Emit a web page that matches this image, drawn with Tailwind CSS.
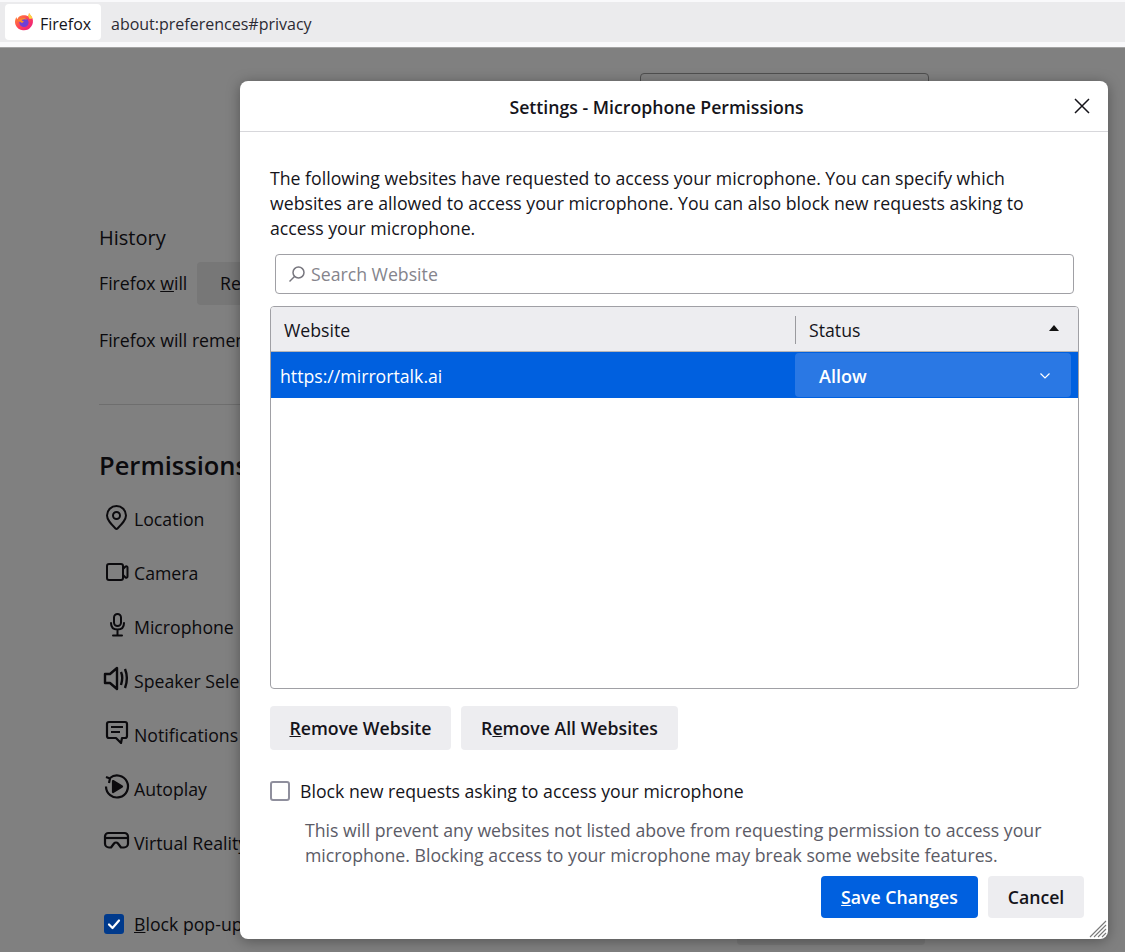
<!DOCTYPE html>
<html lang="en">
<head>
<meta charset="UTF-8" />
<title>Settings - Microphone Permissions</title>
<script src="https://cdn.jsdelivr.net/npm/@tailwindcss/browser@4"></script>
</head>
<body class="relative h-[952px] overflow-hidden bg-[#808080] font-['Open_Sans','Noto_Sans',sans-serif] text-[17.7px] text-[#15141a]">
  <!-- Address bar -->
  <header class="h-[48px] border-b border-[#a3a3a3] bg-[#f9f9fb] pt-[2px]">
    <div class="flex h-[40px] items-center bg-[#ebebed] pl-[5px]">
      <div class="flex h-[36px] w-[96px] items-center gap-[6px] rounded bg-white pl-[9px] text-[16px]">
        <svg width="20" height="20" viewBox="0 0 20 20" class="shrink-0">
          <defs>
            <linearGradient id="fx" x1="0" y1="0" x2="1" y2="1"><stop offset="0" stop-color="#ff9a2e"/><stop offset="0.55" stop-color="#ff3d5a"/><stop offset="1" stop-color="#e31587"/></linearGradient>
          </defs>
          <path d="M15 1c.6 1.600 2.700 3 3.500 5.500.9 2.800.5 5.700-1.300 8A9 9 0 0 1 1.600 13C.6 10.500.9 7.500 2.400 5c.1 1 .5 1.700 1 2.200C4 5 6 3.500 8.700 3.200 11 3 13 3.500 14.400 4.300 14.700 3.200 15 2 15 1z" fill="url(#fx)"/>
          <path d="M15 1c1.200 1.500 3 3 3.500 5.500l-3 .5c-.3-1-1-2-1.500-2.700C14.700 3.200 15 2 15 1z" fill="#ffd23f"/>
          <circle cx="10" cy="10.500" r="4.600" fill="#6f3fd6"/>
          <path d="M4 8.500c1.500-2 4-3 6.500-2.400 1.300.3 2 1 2.500 1.700-1.500-.7-3.500-.7-4.800 0-.4.200-.4.700 0 .9L10 9.500l-2 1.600C6 10 5 9.400 4 8.500z" fill="#ff8a24"/>
        </svg>
        <span class="translate-y-[2px]">Firefox</span>
      </div>
      <span class="ml-[10px] translate-y-[2px] text-[16px] text-[#2b2a33]">about:preferences#privacy</span>
    </div>
  </header>

  <!-- Dimmed preferences page behind the dialog -->
  <main class="w-[925px] pl-[99px] text-[#0b0a0d]">
    <div class="ml-[541px] h-[40px] w-[289px] translate-y-[25px] rounded border border-[#4f4f4f]"></div>
    <h2 class="mt-[136px] text-[20px] leading-[27px] font-medium">History</h2>
    <div class="mt-[11px] flex h-[43px] items-center">
      <span class="w-[98px]">Firefox <span class="underline">w</span>ill</span>
      <span class="flex h-full w-[120px] items-center rounded bg-[#777777] pl-[23px]">Re</span>
    </div>
    <p class="mt-[23px] leading-[25px] whitespace-nowrap">Firefox will remember</p>
    <div class="mt-[51px] h-px w-[400px] bg-[#6e6e6e]"></div>
    <h2 class="mt-[42px] text-[25.5px] leading-[36px] font-semibold">Permissions</h2>
    <ul class="mt-[24px] flex flex-col gap-[29px] leading-[25px]">
      <li class="flex items-center gap-[6px] whitespace-nowrap">
        <svg width="30" height="30" viewBox="0 0 30 30" fill="none" stroke="#0b0a0d" stroke-width="2" class="-my-[4px] -translate-y-[3px] overflow-visible"><path d="M18.500 26.500c-.6.6-1.400.6-2 0C12 22 8 18 8 13.500a9.500 9.500 0 0 1 19 0c0 4.500-4 8.500-8.500 13z"/><circle cx="17.500" cy="13.500" r="3.500"/></svg>
        <span class="-ml-[1px]">Location</span>
      </li>
      <li class="flex items-center gap-[6px] whitespace-nowrap">
        <svg width="30" height="30" viewBox="0 0 30 30" fill="none" stroke="#0b0a0d" stroke-width="2" stroke-linejoin="round" class="-my-[4px] -translate-y-[3px] overflow-visible"><path d="M10 8h12a2 2 0 0 1 2 2v12a2 2 0 0 1-2 2H10a2 2 0 0 1-2-2V10a2 2 0 0 1 2-2z"/><path d="M24 13l2.500-2.500c.8-.6 2-.2 2 1v9c0 1.200-1.200 1.600-2 1L24 19"/></svg>
        <span class="-ml-[1px]">Camera</span>
      </li>
      <li class="flex items-center gap-[6px] whitespace-nowrap">
        <svg width="30" height="30" viewBox="0 0 30 30" fill="none" stroke="#0b0a0d" stroke-width="2" stroke-linecap="round" class="-my-[4px] -translate-y-[3px] overflow-visible"><rect x="15" y="4" width="7" height="12" rx="3.500"/><path d="M12 13c0 4 2.500 6.500 6.500 6.500S25 17 25 13M18.500 19.500V25M14 25.500h9"/></svg>
        <span class="-ml-[1px]">Microphone</span>
      </li>
      <li class="flex items-center gap-[6px] whitespace-nowrap">
        <svg width="30" height="30" viewBox="0 0 30 30" fill="none" stroke="#0b0a0d" stroke-width="2.400" stroke-linejoin="round" class="-my-[4px] -translate-y-[3px] overflow-visible"><path d="M6 10h5l7-6v21l-7-6H6z"/><path d="M22 8c1.600 3.500 1.600 8 0 13M26 5c2.300 5.500 2.300 13 0 19"/></svg>
        <span class="-ml-[1px]">Speaker Selection</span>
      </li>
      <li class="flex items-center gap-[6px] whitespace-nowrap">
        <svg width="30" height="30" viewBox="0 0 30 30" fill="none" stroke="#0b0a0d" stroke-width="2.200" stroke-linejoin="round" class="-my-[4px] -translate-y-[3px] overflow-visible"><path d="M10 4h16a2 2 0 0 1 2 2v12a2 2 0 0 1-2 2h-3l-1 5-5-5H10a2 2 0 0 1-2-2V6a2 2 0 0 1 2-2z"/><path d="M12 9h12M12 14h9"/></svg>
        <span class="-ml-[1px]">Notifications</span>
      </li>
      <li class="flex items-center gap-[6px] whitespace-nowrap">
        <svg width="30" height="30" viewBox="0 0 30 30" fill="none" stroke="#0b0a0d" stroke-width="2.200" class="-my-[4px] -translate-y-[3px] overflow-visible"><path d="M11 6a11 11 0 1 1-4 8.500"/><path d="M7 5l4 1.500L10 11" stroke-linejoin="round"/><path d="M14 9l9 5.500-9 5.500z" fill="#0b0a0d" stroke-linejoin="round"/></svg>
        <span class="-ml-[1px]">Autoplay</span>
      </li>
      <li class="flex items-center gap-[6px] whitespace-nowrap">
        <svg width="30" height="30" viewBox="0 0 30 30" fill="none" stroke="#0b0a0d" stroke-width="2.200" stroke-linejoin="round" class="-my-[4px] -translate-y-[3px] overflow-visible"><path d="M9.500 7h16a3.500 3.500 0 0 1 3.500 3.500v7a4 4 0 0 1-4 4h-3l-3-4a2.500 2.500 0 0 0-4 0l-3 4H10a4 4 0 0 1-4-4v-7A3.500 3.500 0 0 1 9.500 7z"/><path d="M7 12h21"/></svg>
        <span class="-ml-[1px]">Virtual Reality</span>
      </li>
    </ul>
    <div class="mt-[55px] ml-[5px] flex items-center gap-[10px] whitespace-nowrap">
      <span class="flex size-[20px] items-center justify-center rounded-[3px] bg-[#003a8c]">
        <svg width="14" height="14" viewBox="0 0 14 14" fill="none" stroke="#ffffff" stroke-width="2.200" stroke-linecap="round" stroke-linejoin="round"><path d="M2 7.500l3.500 3.500L12 3.500"/></svg>
      </span>
      <span><span class="underline">B</span>lock pop-up windows</span>
      <span class="-my-[11px] ml-auto h-[42px] w-[188px] rounded bg-[#777777]"></span>
    </div>
  </main>

  <!-- Microphone permissions dialog -->
  <section class="absolute top-[81px] left-[240px] flex h-[858px] w-[868px] flex-col rounded-lg bg-white shadow-[0_2px_14px_rgba(0,0,0,0.35)]">
    <div class="relative flex h-[51px] shrink-0 items-center justify-center border-b border-[#d7d7db] pr-[35px]">
      <h1 class="translate-y-[1px] text-[17.7px] font-semibold text-[#15141a]">Settings - Microphone Permissions</h1>
      <svg width="16" height="16" viewBox="0 0 16 16" fill="none" stroke="#15141a" stroke-width="1.500" class="absolute top-[17px] right-[18px]"><path d="M1 1l14 14M15 1L1 15"/></svg>
    </div>

    <div class="flex grow flex-col px-[30px] pt-[34px]">
      <p class="w-[790px] leading-[25px]">The following websites have requested to access your microphone. You can specify which websites are allowed to access your microphone. You can also block new requests asking to access your microphone.</p>

      <div class="mt-[13px] ml-[5px] flex h-[40px] w-[799px] items-center gap-[5px] rounded border border-[#a0a0a5] pl-[12px] text-[#85848c]">
        <svg width="18" height="18" viewBox="0 0 18 18" fill="none" stroke="#77767e" stroke-width="1.500"><circle cx="10.500" cy="7.500" r="5.500"/><path d="M6.500 11.500L1.500 16.500"/></svg>
        <span>Search Website</span>
      </div>

      <div class="mt-[12px] flex h-[383px] w-[809px] flex-col overflow-hidden rounded border border-[#a0a0a5]">
        <div class="flex h-[45px] shrink-0 items-center border-b border-[#b5b5b8] bg-[#ededf0] pt-[2px]">
          <span class="w-[524px] pl-[13px]">Website</span>
          <span class="h-[28px] w-px bg-[#9a9a9e]"></span>
          <span class="pl-[13px]">Status</span>
          <span class="mt-[-4px] ml-auto mr-[19px] h-0 w-0 border-x-[5.500px] border-b-[6px] border-x-transparent border-b-[#111111]"></span>
        </div>
        <div class="flex h-[46px] shrink-0 items-center bg-[#0060df] text-white">
          <span class="w-[524px] translate-y-[1px] pl-[9px]">https://mirrortalk.ai</span>
          <span class="flex h-[44px] w-[276px] items-center justify-between rounded bg-[#2a78e4] pt-[2px] pr-[20px] pl-[24px] text-[18px] font-semibold">
            Allow
            <svg width="12" height="8" viewBox="0 0 12 8" fill="none" stroke="#ffffff" stroke-width="1.200"><path d="M1.500 1.500L6 6l4.500-4.500"/></svg>
          </span>
        </div>
      </div>

      <div class="mt-[17px] flex gap-[10px] text-[17.7px] font-semibold">
        <button class="h-[44px] w-[181px] rounded bg-[#ededf0]"><span class="underline">R</span>emove Website</button>
        <button class="h-[44px] w-[217px] rounded bg-[#ededf0]">R<span class="underline">e</span>move All Websites</button>
      </div>

      <div class="mt-[28px] flex items-center gap-[10px]">
        <span class="size-[20px] rounded-[3px] border-2 border-[#8f8f9d]"></span>
        <span>Block new requests asking to access your microphone</span>
      </div>

      <p class="mt-[13px] ml-[35px] w-[760px] leading-[25px] text-[#5b5b66]">This will prevent any websites not listed above from requesting permission to access your microphone. Blocking access to your microphone may break some website features.</p>

      <div class="mt-[8px] mr-[-6px] flex justify-end gap-[10px] text-[17.7px] font-semibold">
        <button class="h-[42px] w-[157px] rounded bg-[#0060df] pt-[2px] text-white"><span class="underline">S</span>ave Changes</button>
        <button class="h-[42px] w-[96px] rounded bg-[#ededf0] pt-[2px]">Cancel</button>
      </div>
    </div>

    <svg width="18" height="18" viewBox="0 0 18 18" stroke="#7a7a7a" stroke-width="1.100" class="absolute right-[1px] bottom-[1px]"><path d="M1 17L17 1M5 17L17 5M9 17l8-8M13 17l4-4"/></svg>
  </section>
</body>
</html>
